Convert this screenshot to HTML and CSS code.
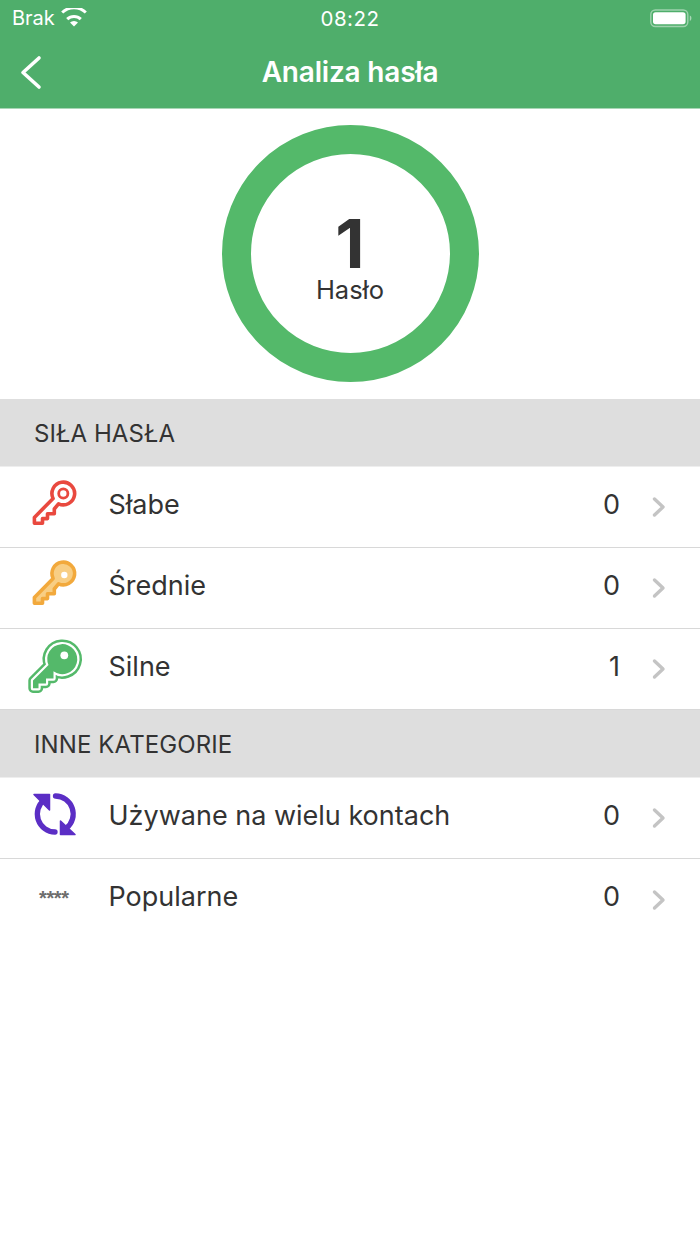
FILE: index.html
```html
<!DOCTYPE html>
<html lang="pl">
<head>
<meta charset="utf-8">
<title>Analiza hasła</title>
<link rel="stylesheet" href="styles.css">
</head>
<body>
<header class="top">
  <div class="status">
    <div class="status-left">
      <span>Brak</span>
      <svg class="wifi" viewBox="0 0 26 19"><path d="M13 18.6 9 14.5a5.8 5.8 0 0 1 8 0Z" fill="#fff"/><path d="M6.2 11.200a9.800 9.800 0 0 1 13.600 0M1.200 4.500a17.200 17.200 0 0 1 23.600 0" fill="none" stroke="#fff" stroke-width="3"/></svg>
    </div>
    <span class="time">08:22</span>
    <div class="status-right">
      <svg class="battery" viewBox="0 0 42 19"><rect x=".8" y="1" width="37" height="16.5" rx="4.5" fill="none" stroke="#fff" stroke-opacity=".45" stroke-width="1.4"/><rect x="3" y="3.2" width="32.6" height="12" rx="2.6" fill="#fff"/><path d="M39.8 6.5c1.2.4 1.6 1.6 1.6 2.7s-.4 2.3-1.6 2.7Z" fill="#fff" fill-opacity=".5"/></svg>
    </div>
  </div>
  <nav class="nav">
    <svg class="back" viewBox="0 0 26 36"><path d="M20 4 4 18.500l16 14.500" fill="none" stroke="#fff" stroke-width="3.6" stroke-linecap="round" stroke-linejoin="round"/></svg>
    <h1 class="title">Analiza hasła</h1>
  </nav>
</header>

<section class="summary">
  <div class="ring">
    <div class="count">1</div>
    <div class="count-label">Hasło</div>
  </div>
</section>

<h2 class="section">SIŁA HASŁA</h2>
<ul class="list">
  <li class="row">
    <svg class="icon" viewBox="0 -3 70 70"><path class="key" d="M14.400 48.300V42.400L33.100 23.500A11.350 11.350 0 1 1 38.500 28.800L34.300 34V38.800H27.500V43.600H22.500V48.300Z" fill="none" stroke="#e9493f"/><circle cx="43.300" cy="18.500" r="4.600" fill="none" stroke="#e9493f" stroke-width="2.800"/></svg>
    <span class="label">Słabe</span><span class="value">0</span>
    <svg class="chev" viewBox="0 0 14 22"><path d="M2.500 3 11 11 2.500 19" /></svg>
  </li>
  <li class="row">
    <svg class="icon" viewBox="0 -2 70 70"><path class="key" d="M14.400 48.300V42.400L33.100 23.500A11.350 11.350 0 1 1 38.500 28.800L34.300 34V38.800H27.500V43.600H22.500V48.300Z" fill="#f8ce84" stroke="#f2a93c"/><circle cx="44.300" cy="20" r="3.200" fill="#fff"/></svg>
    <span class="label">Średnie</span><span class="value">0</span>
    <svg class="chev" viewBox="0 0 14 22"><path d="M2.500 3 11 11 2.500 19" /></svg>
  </li>
  <li class="row">
    <svg class="icon" viewBox="0 2 70 70"><path class="key-edge" d="M13 56.300V48.600L28.500 33.100A15 15 0 1 1 33.500 39.300V46.500H26V51.500H18.500V56.300Z"/><path class="key-gap" d="M13 56.300V48.600L28.500 33.100A15 15 0 1 1 33.500 39.300V46.500H26V51.500H18.500V56.300Z"/><path d="M13 56.300V48.600L28.500 33.100A15 15 0 1 1 33.500 39.300V46.500H26V51.500H18.500V56.300Z" fill="#54b96a"/><circle cx="44.300" cy="23.300" r="3.900" fill="#fff"/></svg>
    <span class="label">Silne</span><span class="value">1</span>
    <svg class="chev" viewBox="0 0 14 22"><path d="M2.500 3 11 11 2.500 19" /></svg>
  </li>
</ul>

<h2 class="section">INNE KATEGORIE</h2>
<ul class="list">
  <li class="row">
    <svg class="icon" viewBox="0 3 70 70"><g fill="none" stroke="#5b2ec5" stroke-width="5.300" stroke-linecap="round"><path d="M35 52A18 18 0 0 1 24 20"/><path d="M35.500 16A18 18 0 0 1 46.500 48"/></g><path d="M14 14.500H29.500V30Z" fill="#5b2ec5" stroke="#5b2ec5" stroke-width="1.500" stroke-linejoin="round"/><path d="M55 54.500H40.500V41Z" fill="#5b2ec5" stroke="#5b2ec5" stroke-width="1.500" stroke-linejoin="round"/></svg>
    <span class="label">Używane na wielu kontach</span><span class="value">0</span>
    <svg class="chev" viewBox="0 0 14 22"><path d="M2.500 3 11 11 2.500 19" /></svg>
  </li>
  <li class="row">
    <span class="stars">****</span>
    <span class="label">Popularne</span><span class="value">0</span>
    <svg class="chev" viewBox="0 0 14 22"><path d="M2.500 3 11 11 2.500 19" /></svg>
  </li>
</ul>
</body>
</html>
```
FILE: styles.css
```css
* { box-sizing: border-box; }
html, body { margin: 0; padding: 0; }
body { width: 700px; height: 1244px; background: #fff; color: #333; font-family: Inter, "Liberation Sans", sans-serif; overflow: hidden; }

.top { height: 109px; background: #4fae6b; border-bottom: 1px solid #a9d6b6; color: #fff; }
.status { display: grid; grid-template-columns: 1fr auto 1fr; align-items: center; height: 36px; padding: 0 8px; font-size: 20px; }
.status-left { display: flex; align-items: center; gap: 6px; padding-left: 4px; }
.wifi { width: 26px; height: 19px; margin-top: -1px; }
.status-right { display: flex; justify-content: flex-end; }
.battery { width: 42px; height: 19px; }
.time { font-size: 20.5px; letter-spacing: .5px; }

.nav { display: grid; grid-template-columns: 1fr auto 1fr; align-items: center; height: 72px; }
.back { width: 26px; height: 36px; margin-left: 19px; grid-column: 1; grid-row: 1; }
.title { margin: 0; font-size: 28px; font-weight: 600; letter-spacing: -.2px; grid-column: 2; grid-row: 1; }

.summary { display: flex; justify-content: center; align-items: center; height: 290px; padding-bottom: 1px; }
.ring { width: 257px; height: 257px; padding-top: 14px; border: 29.500px solid #54b96a; border-radius: 50%; display: flex; flex-direction: column; align-items: center; justify-content: center; }
.count { font-size: 68px; line-height: 52px; font-weight: 700; color: #333; }
.count-label { font-size: 25.5px; line-height: 30px; margin-top: 6px; }

.section { margin: 0; height: 68px; padding: 1px 0 0 34px; display: flex; align-items: center; background: #dedede; border-bottom: 1px solid #eee; font-size: 24px; font-weight: 400; color: #333; letter-spacing: .1px; }
.list { margin: 0; padding: 0; list-style: none; }
.row { display: flex; align-items: center; height: 81px; border-bottom: 1px solid #d8d8d8; padding-left: 20px; padding-right: 34px; }
.list:last-of-type .row:last-child { border-bottom: 0; }
.icon, .stars { width: 70px; height: 70px; flex: none; margin-right: 18.500px; }
.stars { display: flex; align-items: center; padding-left: 19px; padding-bottom: 2px; font-size: 20px; font-weight: 700; color: #6d6d6d; font-family: "Liberation Sans", sans-serif; letter-spacing: -.4px; }
.key { stroke-width: 3.600; stroke-linejoin: round; }
.key-edge { fill: #54b96a; stroke: #54b96a; stroke-width: 9.400; stroke-linejoin: round; }
.key-gap { fill: #fff; stroke: #fff; stroke-width: 4.400; stroke-linejoin: round; }
.label { flex: 1; font-size: 27px; margin-bottom: 6px; }
.value { font-size: 27px; width: 30px; text-align: right; margin-right: 32px; margin-bottom: 6px; }
.chev { width: 14px; height: 22px; flex: none; }
.chev path { fill: none; stroke: #c4c4c4; stroke-width: 3.400; stroke-linecap: round; stroke-linejoin: round; }
```
